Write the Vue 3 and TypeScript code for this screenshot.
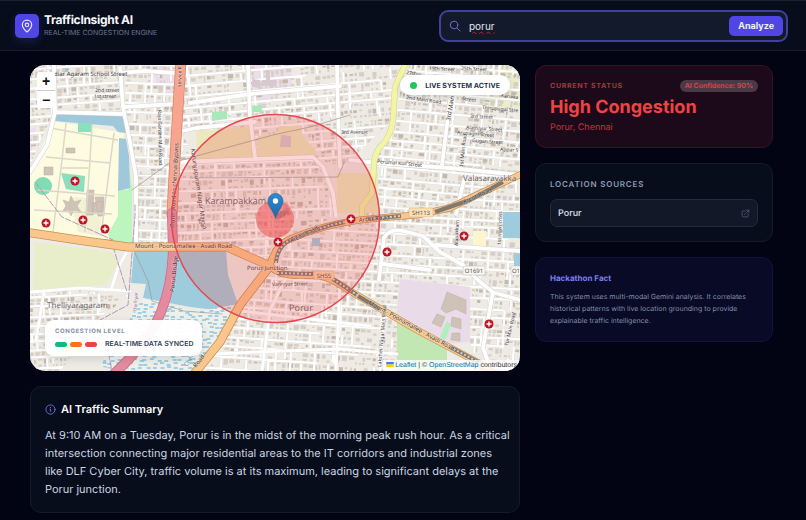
<script setup lang="ts">
import { ref } from 'vue'

interface District {
  id: string
  shape: string
  box: [number, number, number, number]
  angle: number
  seed: number
}
interface Label {
  text: string
  x: number
  y: number
  size: number
  angle?: number
  kind?: string
}

const query = ref('porur')
const levels = ['low', 'medium', 'high']

function random(seed: number) {
  let s = seed
  return () => {
    s = (s * 16807) % 2147483647
    return s / 2147483647
  }
}

const districts: District[] = [
  { id: 'nw', shape: 'M30 65H121L123 113L54 110L30 165Z', box: [0, 40, 160, 140], angle: -4, seed: 71 },
  { id: 'w', shape: 'M125 65H181L172 247H138L136 177L125 115Z', box: [100, 50, 120, 220], angle: 2, seed: 913 },
  { id: 'n', shape: 'M181 65H400L392 120L340 170L338 165L190 128L179 125Z', box: [150, 40, 280, 160], angle: -5, seed: 417 },
  { id: 'mid', shape: 'M178 128L197 160L315 158L330 190L336 214L277 250L268 262L226 246H173Z', box: [150, 110, 210, 170], angle: -2, seed: 5231 },
  { id: 'ne', shape: 'M405 65H520V175L417 214L362 219L372 193L376 157L395 120Z', box: [340, 40, 210, 200], angle: 5, seed: 8123 },
  { id: 'e', shape: 'M278 268L290 240L323 227L417 216L520 175V371H478L470 342V287L400 278L396 310L330 277Z', box: [250, 160, 300, 240], angle: 3, seed: 2647 },
  { id: 's', shape: 'M270 268L287 277L330 280L397 320V371H200L240 305Z', box: [180, 250, 240, 150], angle: 4, seed: 3319 },
  { id: 'sw', shape: 'M30 295L75 290L130 295L100 318L60 371H30Z', box: [10, 280, 140, 110], angle: -3, seed: 121 },
]

const fabric = districts.map((d) => {
  const next = random(d.seed)
  const [x0, y0, w, h] = d.box
  let streets = ''
  let houses = ''
  let darker = ''
  let y = y0
  while (y < y0 + h) {
    const rowHeight = 7 + Math.round(next() * 5)
    const start = x0 + Math.round(next() * 20)
    const length = w * (0.5 + next() * 0.5)
    streets += `M${start} ${y}h${length.toFixed(0)}`
    let x = x0
    let until = x + 15 + next() * 35
    while (x < x0 + w) {
      if (x > until) {
        streets += `M${x.toFixed(0)} ${y}v${next() > 0.5 ? rowHeight * 2 : rowHeight}`
        until = x + 14 + next() * 38
        x += 2
      }
      const bw = 1.5 + next() * 4
      const bh = 1.5 + next() * (rowHeight / 2 - 2)
      const top = y + 1.6 + next()
      const part = `M${x.toFixed(1)} ${top.toFixed(1)}h${bw.toFixed(1)}v${bh.toFixed(1)}h-${bw.toFixed(1)}z`
      const roll = next()
      if (roll > 0.75) darker += part
      else if (roll > 0.22) houses += part
      if (next() > 0.4) {
        const low = y + rowHeight - 3.5
        houses += `M${x.toFixed(1)} ${low.toFixed(1)}h${(bw * 0.8).toFixed(1)}v2h-${(bw * 0.8).toFixed(1)}z`
      }
      x += bw + 0.8 + next() * 2
    }
    y += rowHeight
  }
  const turn = `rotate(${d.angle} ${x0 + w / 2} ${y0 + h / 2})`
  return { ...d, streets, houses, darker, turn }
})

const marsh = (() => {
  const next = random(607)
  let path = ''
  for (let y = 303; y < 371; y += 4) {
    for (let x = 100; x < 240; x += 7) path += `M${(x + next() * 5).toFixed(1)} ${y + Math.round(next() * 2)}h4`
  }
  return path
})()

const clinics = [
  [75, 181], [83, 220], [46, 223], [105, 229], [351, 219], [278, 242], [387, 252], [464, 236], [489, 324],
]

const labels: Label[] = [
  { text: 'diar Agaram School Street', x: 54, y: 76, size: 6 },
  { text: '2nd street', x: 95, y: 92, size: 5 },
  { text: '1st street', x: 94, y: 98, size: 5 },
  { text: 'Raja Garden Main Road', x: 158, y: 110, size: 5, angle: 89 },
  { text: 'service R', x: 181, y: 87, size: 5, angle: -88 },
  { text: 'Outer Road to chennai Bypass', x: 174, y: 228, size: 6, angle: -87 },
  { text: 'Karunyapuram Nagar Main', x: 191, y: 149, size: 6, angle: 82 },
  { text: 'Karampakkam', x: 205, y: 204, size: 9, kind: 'place' },
  { text: 'Valasaravakka', x: 463, y: 181, size: 8, kind: 'place' },
  { text: 'Thelliyaragaram', x: 47, y: 308, size: 8, kind: 'place' },
  { text: 'Porur', x: 289, y: 311, size: 9, kind: 'place' },
  { text: '27th', x: 406, y: 74, size: 5, angle: 8 },
  { text: '19th Street', x: 429, y: 70, size: 5, angle: 3 },
  { text: '25th Street', x: 461, y: 70, size: 5, angle: 3 },
  { text: '2nd Main Road', x: 406, y: 99, size: 5, angle: 8 },
  { text: 'Street', x: 462, y: 100, size: 5, angle: 8 },
  { text: '3rd Avenue', x: 341, y: 134, size: 5, angle: -1 },
  { text: '3rd Main', x: 450, y: 121, size: 6, angle: -80 },
  { text: '3rd street', x: 470, y: 118, size: 5, angle: 2 },
  { text: 'Kanaka', x: 501, y: 97, size: 5, angle: 7 },
  { text: 'Thirupugal Stre', x: 482, y: 109, size: 5, angle: 5 },
  { text: 'Alathiyur Street', x: 466, y: 129, size: 5, angle: 4 },
  { text: 'Arunagiri Street', x: 457, y: 134, size: 5, angle: 5 },
  { text: 'Gugan Street', x: 472, y: 142, size: 5, angle: 4 },
  { text: 'Appar S', x: 500, y: 151, size: 5, angle: 3 },
  { text: '1st Main Road', x: 463, y: 167, size: 5, angle: -84 },
  { text: 'Perumal Koil Street', x: 377, y: 163, size: 5, angle: 5 },
  { text: 'Arcot Road', x: 464, y: 204, size: 6, angle: -24 },
  { text: 'Arcot Road', x: 359, y: 222, size: 6, angle: -5 },
  { text: 'Arcot Road', x: 291, y: 243, size: 6, angle: -27 },
  { text: 'Mount - Poonamallee - Avadi Road', x: 135, y: 248, size: 6 },
  { text: 'Porur Bridge', x: 174, y: 292, size: 6, angle: -84 },
  { text: 'Road', x: 197, y: 220, size: 5, angle: 55 },
  { text: 'Porur Junction', x: 247, y: 270, size: 6 },
  { text: 'Vanniyar Street', x: 272, y: 286, size: 5, angle: -1 },
  { text: 'Mount - Poonamallee - Avadi Road', x: 368, y: 304, size: 6, angle: 29 },
  { text: 'Lakshmi Nagar Main Road', x: 381, y: 367, size: 5, angle: -85 },
  { text: 'Tur Main Road', x: 508, y: 346, size: 5, angle: -77 },
  { text: 'Alapakkam', x: 458, y: 246, size: 5, angle: -88 },
  { text: '1st main cross', x: 501, y: 245, size: 5, angle: -88 },
  { text: 'Road', x: 196, y: 368, size: 6, angle: -52 },
  { text: 'Thelliyar', x: 137, y: 312, size: 5, angle: -88, kind: 'border' },
  { text: 'Chen', x: 187, y: 367, size: 6, angle: -58, kind: 'water' },
]
</script>

<template>
  <div class="page">
    <header class="topbar">
      <div class="brand">
        <span class="logo">
          <svg viewBox="0 0 24 24" class="icon" aria-hidden="true">
            <path d="M20 10c0 5-5.500 10.200-7.400 11.800a1 1 0 0 1-1.200 0C9.500 20.200 4 15 4 10a8 8 0 0 1 16 0Z" />
            <circle cx="12" cy="10" r="3" />
          </svg>
        </span>
        <div>
          <h1>TrafficInsight AI</h1>
          <p>REAL-TIME CONGESTION ENGINE</p>
        </div>
      </div>
      <form class="search" @submit.prevent>
        <svg viewBox="0 0 24 24" class="icon" aria-hidden="true">
          <circle cx="10" cy="10" r="7.500" />
          <path d="m15.500 15.500 6.500 6.500" />
        </svg>
        <input v-model="query" type="text" aria-label="Search location" spellcheck="false" />
        <button type="submit">Analyze</button>
      </form>
    </header>

    <main class="content">
      <div class="primary">
        <section class="map" aria-label="Traffic map">
          <svg class="tiles" viewBox="30 65 490 306" preserveAspectRatio="xMidYMid slice">
            <defs>
              <clipPath v-for="d in fabric" :id="d.id" :key="d.id"><path :d="d.shape" /></clipPath>
              <clipPath id="wet"><path d="M143 298L195 312L238 304L197 371H118L100 366Z" /></clipPath>
              <linearGradient id="pin" x1="0" y1="0" x2="0" y2="1">
                <stop offset="0" stop-color="#2f8bd0" />
                <stop offset="1" stop-color="#1e69a8" />
              </linearGradient>
            </defs>
            <rect x="30" y="65" width="490" height="306" fill="#eeebe5" />

            <path fill="#ebdde9" d="M151 65H177L175 95H160ZM249 65H291L292 90L258 106ZM30 130L36 126L30 160Z" />
            <path fill="#e8edca" d="M490 65H520V108L478 107ZM35 242L111 252L119 262L107 284L33 292Z" />
            <path fill="#fdfce0" d="M54 121L124 133L118 190V217L129 246L30 232V172Z" />
            <path fill="#e9e9cb" d="M70 197L90 198L102 216L98 236L78 232Z" opacity=".6" />
            <path fill="#bdf5bf" d="M127 154L132 187V246H113L108 234L118 216V190H128Z" />
            <path fill="#9fc9da" d="M55 112L123 115L126 133L118 132L113 126L54 121ZM119 138L126 139L129 156L130 188L118 191ZM62 65H68V72H62Z" />
            <path fill="#8bdfbd" d="M78 123H92V132H78ZM61 173L85 176L84 192L66 189Z" />
            <circle cx="43" cy="186" r="9" fill="#7fdcb5" />

            <g v-for="d in fabric" :key="d.id" :clip-path="`url(#${d.id})`">
              <g :transform="d.turn">
                <path :d="d.houses" fill="#d6cdc4" />
                <path :d="d.darker" fill="#c4b8ad" />
                <path :d="d.streets" fill="none" stroke="#dedbd6" stroke-width="2.600" />
                <path :d="d.streets" fill="none" stroke="#fff" stroke-width="2" />
              </g>
            </g>

            <path fill="#ebe9bd" d="M196 131L253 127V158L197 160ZM258 136L278 133V126H302V136L316 150V157L257 158ZM337 173H378V213H337Z" />
            <path fill="#d8c8cf" d="M281 135L291 136V147H280ZM252 79L260 80V88L252 87ZM266 70H270V80H276V86H262V80H266Z" />
            <path fill="#a8e8bb" d="M251 106L262 105V112H251ZM212 112L227 111V119L212 121Z" />
            <path fill="#9fccdd" d="M134 250L226 250L228 275L238 304L215 310L190 307L143 298L146 284L131 283Z" />
            <g clip-path="url(#wet)">
              <rect x="95" y="290" width="150" height="85" fill="#f0f0ea" />
              <path :d="marsh" stroke="#83c3e3" stroke-width="1.300" />
            </g>
            <path fill="#e9dbe8" d="M400 279L470 287V342L444 344L396 318Z" />
            <path fill="#c2e7b3" d="M397 319L447 348V371H397Z" />
            <path fill="#aef0bd" d="M440 337L447 321L451 325L445 340Z" />
            <path fill="#fbf6cf" d="M473 231H486V247H473Z" />
            <path fill="#9fccdd" d="M503 212H520V238H503ZM514 252H520V266H514ZM312 238H320V246H312ZM35 366L30 371H30Z" />
            <path fill="#cfc3b7" stroke="#bcafa2" stroke-width=".5" d="M447 292L466 300V314L456 309L446 313L441 309ZM437 314L445 317L441 327L432 323ZM452 317L461 319V329L451 326ZM452 333H460V341L451 340ZM63 200L69 202L71 196L74 202L81 200L77 206L81 212L74 210L71 216L68 210L62 212L66 206ZM87 190H94L93 215H86ZM95 197H104V216H98ZM44 167H53V175H44ZM66 148H75V153H66ZM92 203L102 201V211L93 214Z" />
            <path fill="none" stroke="#dcd6cb" stroke-width="1.500" d="M66 123L62 160L53 232M92 125L90 160L85 232M114 133L108 180L101 236M50 128L118 140M46 157L110 163M38 190L62 192L115 196M34 210L112 214M62 168H88" />

            <g fill="none" stroke-linecap="round" stroke-linejoin="round">
              <g v-for="edge in [true, false]" :key="String(edge)" :stroke="edge ? '#d7d3ce' : '#fff'" :stroke-width="edge ? 4.8 : 3.8">
                <path d="M120 68L123 107L129 137L136 177V245M120 73L145 71L175 73M123 107L177 104M54 65L55 112L47 145L30 172M55 112L123 114" />
                <path d="M248 65L250 117L255 157M190 103L250 94L340 86M182 131L196 128L255 122M181 162L230 160L313 157L323 167L333 193L336 216M337 65L338 113L340 167" />
                <path d="M350 160L377 163L450 168L520 175M450 100L442 165M384 238L379 280M384 238Q389 228 403 231L423 236L440 252L463 265L480 282L493 292L483 348L491 370M436 245L520 251M383 264L430 270M492 292L520 300M464 180L456 214" />
                <path d="M30 292L80 288L130 291M111 290L118 268L130 246M44 292L36 340M216 354L256 352L340 349L397 354M287 276L270 310L262 371M340 282L336 371M384 315L380 371M240 311L370 326" stroke-width="3" />
              </g>
              <path d="M78 240L111 240L127 292M35 182L62 217L113 240M135 205V215L128 305L100 320M102 322L112 371" stroke="#b696b8" stroke-width="1" stroke-dasharray="6 2" />
              <path d="M132 190L168 164L200 155L229 147L273 135L310 127L350 115M135 253L148 281L152 301L184 311L222 314M190 178L338 177L344 163" stroke="#9b9895" stroke-width=".7" />
              <path d="M405 65L395 87L393 120Q391 137 380 147Q374 155 374 165L372 193L362 207V220" stroke="#cfd09b" stroke-width="6" />
              <path d="M405 65L395 87L393 120Q391 137 380 147Q374 155 374 165L372 193L362 207V220" stroke="#f3f5a5" stroke-width="5" />
              <path d="M181 60L176 140L172 215" stroke="#d9816c" stroke-width="11" />
              <path d="M181 60L176 140L172 215" stroke="#f8a58f" stroke-width="9.500" />
              <path d="M172 213L173 250Q172 285 161 312Q150 340 114 374" stroke="#c96c84" stroke-width="10" />
              <path d="M172 213L173 250Q172 285 161 312Q150 340 114 374" stroke="#e58b9f" stroke-width="8.500" />
              <g v-for="edge in [true, false]" :key="`m${edge}`" :stroke="edge ? '#c7904f' : '#fbc68c'">
                <path d="M25 232L78 240L128 247L198 247L227 247L270 266L240 305L220 342L194 374" :stroke-width="edge ? 9 : 7.5" />
                <path d="M270 266Q280 278 313 275Q329 276 350 291L417 330L477 362L495 374M270 265Q275 245 290 239Q323 225 360 220L390 217L417 215L450 208L483 192L524 173" :stroke-width="edge ? 7 : 5.6" />
              </g>
              <path d="M276 263Q277 246 292 239Q323 226 345 222M366 219L401 216M435 212L470 200L503 182M277 273L313 274M333 279L357 295M358 296L380 309M450 347L480 363" stroke="#817970" stroke-width="4" stroke-linecap="butt" />
              <path d="M276 263Q277 246 292 239Q323 226 345 222M366 219L401 216M277 273L313 274M333 279L357 295M450 347L480 363" stroke="#ddd0c3" stroke-width="2" stroke-dasharray="2 2" stroke-linecap="butt" />
            </g>

            <g class="shields">
              <rect x="409" y="208" width="24" height="9" rx="1" fill="#fbe0b8" stroke="#d6ac70" />
              <text x="421" y="215">SH113</text>
              <rect x="314" y="271" width="20" height="8" rx="1" fill="#fbd5ae" stroke="#d6ac70" />
              <text x="324" y="278">SH55</text>
              <rect x="463" y="266" width="22" height="9" rx="1" fill="#f7f7f5" stroke="#bbb" />
              <text x="474" y="273">O1691</text>
              <rect x="511" y="266" width="20" height="9" rx="1" fill="#f7f7f5" stroke="#bbb" />
              <text x="516" y="273">O1</text>
            </g>
            <text
              v-for="(l, i) in labels"
              :key="i"
              class="label"
              :class="l.kind"
              :font-size="l.size"
              :transform="`translate(${l.x} ${l.y}) rotate(${l.angle ?? 0})`"
            >{{ l.text }}</text>

            <circle cx="275.500" cy="218.500" r="104" fill="#ef4444" fill-opacity=".22" stroke="#e5484f" stroke-width="1.500" />
            <circle cx="275" cy="219" r="19" fill="#ef4444" fill-opacity=".5" />
            <g v-for="([x, y], i) in clinics" :key="`c${i}`">
              <circle :cx="x" :cy="y" r="4.500" fill="#bd1625" />
              <path :d="`M${x - 2.5} ${y}h5M${x} ${y - 2.5}v5`" stroke="#fff" stroke-width="1.400" />
            </g>
            <ellipse cx="282" cy="214" rx="9" ry="3" fill="#5b2630" opacity=".22" transform="rotate(-35 282 214)" />
            <path d="M275.500 218C274 212 268 206.500 268 201a7.500 7.500 0 0 1 15 0C283 206.500 277 212 275.500 218Z" fill="url(#pin)" stroke="#25679c" stroke-width=".7" />
            <circle cx="275.500" cy="201" r="2.700" fill="#fff" />
          </svg>

          <div class="zoom">
            <button type="button" aria-label="Zoom in">+</button>
            <button type="button" aria-label="Zoom out">−</button>
          </div>
          <div class="live"><i></i>LIVE SYSTEM ACTIVE</div>
          <div class="legend">
            <h2>CONGESTION LEVEL</h2>
            <div class="scale">
              <i v-for="level in levels" :key="level" :class="level"></i>
              <span>REAL-TIME DATA SYNCED</span>
            </div>
          </div>
          <div class="credit">
            <svg viewBox="0 0 12 8" aria-hidden="true"><path fill="#4c7be1" d="M0 0h12v4H0z" /><path fill="#ffd500" d="M0 4h12v4H0z" /></svg>
            <a href="#">Leaflet</a> | © <a href="#">OpenStreetMap</a> contributors
          </div>
        </section>

        <section class="card summary">
          <h2>
            <svg viewBox="0 0 24 24" class="icon" aria-hidden="true">
              <circle cx="12" cy="12" r="10" />
              <path d="M11 11h1v5h1M12 7.500v.5" />
            </svg>
            AI Traffic Summary
          </h2>
          <p>
            At 9:10 AM on a Tuesday, Porur is in the midst of the morning peak rush hour. As a critical
            intersection connecting major residential areas to the IT corridors and industrial zones
            like DLF Cyber City, traffic volume is at its maximum, leading to significant delays at the
            Porur junction.
          </p>
        </section>
      </div>

      <aside class="side">
        <section class="card status">
          <div class="status-head">
            <h2>CURRENT STATUS</h2>
            <span class="badge">AI Confidence: 90%</span>
          </div>
          <strong>High Congestion</strong>
          <p>Porur, Chennai</p>
        </section>

        <section class="card sources">
          <h2>LOCATION SOURCES</h2>
          <a href="#">
            Porur
            <svg viewBox="0 0 24 24" class="icon" aria-hidden="true">
              <path d="M11 5H6a3 3 0 0 0-3 3v10a3 3 0 0 0 3 3h10a3 3 0 0 0 3-3v-5M15 3h6v6M9 15 21 3" />
            </svg>
          </a>
        </section>

        <section class="card fact">
          <h2>Hackathon Fact</h2>
          <p>
            This system uses multi-modal Gemini analysis. It correlates historical patterns with live
            location grounding to provide explainable traffic intelligence.
          </p>
        </section>
      </aside>
    </main>
  </div>
</template>

<style>
body {
  background: #020414;
}
</style>

<style scoped>
.page {
  min-height: 100vh;
  box-sizing: border-box;
  font-family: Inter, "Liberation Sans", sans-serif;
  text-rendering: geometricPrecision;
  color: #cbd5e1;
  background: #020414;
}
.page * {
  box-sizing: border-box;
}
h1,
h2,
p {
  margin: 0;
}
.icon {
  fill: none;
  stroke: currentColor;
  stroke-width: 2;
  stroke-linecap: round;
  stroke-linejoin: round;
  flex: none;
}
.topbar {
  display: flex;
  align-items: center;
  justify-content: space-between;
  gap: 24px;
  height: 51px;
  padding: 0 18px 0 15px;
  background: #080d1c;
  border-top: 1px solid #1a2130;
  border-bottom: 1px solid #161d2c;
}
.brand {
  display: flex;
  align-items: center;
  gap: 5px;
  white-space: nowrap;
}
.logo {
  display: grid;
  place-items: center;
  width: 24px;
  height: 24px;
  border-radius: 5px;
  color: #e8e8ff;
  background: #5046e5;
  box-shadow: 0 3px 8px rgba(79, 70, 229, 0.25);
}
.logo .icon {
  width: 14px;
  height: 14px;
}
.brand h1 {
  font-size: 12px;
  line-height: 14px;
  font-weight: 700;
  letter-spacing: -0.025em;
  color: #f5f7fb;
}
.brand p {
  font-size: 7px;
  line-height: 11px;
  color: #6b768e;
}
.search {
  display: flex;
  align-items: center;
  gap: 8px;
  flex: 0 1 349px;
  height: 32px;
  padding: 0 3px 0 8px;
  border: 2px solid #41409a;
  border-radius: 9px;
  background: #131a2b;
}
.search .icon {
  width: 12px;
  height: 12px;
  color: #6e70cf;
}
.search input {
  flex: 1;
  min-width: 0;
  padding: 0;
  border: 0;
  outline: 0;
  background: none;
  font: 400 10px/16px Inter, sans-serif;
  color: #e2e8f0;
  text-decoration: underline wavy #c01d2e 1px;
}
.search button {
  height: 20px;
  padding: 0 9px;
  border: 0;
  border-radius: 5px;
  font: 700 9px/20px Inter, sans-serif;
  color: #f1f1ff;
  background: #5046e5;
}
.content {
  display: grid;
  grid-template-columns: minmax(0, 1fr) 238px;
  align-items: start;
  gap: 15px;
  padding: 14px 33px 6px 30px;
}
.primary,
.side {
  display: grid;
  gap: 15px;
}
.map {
  position: relative;
  overflow: hidden;
  border-radius: 15px;
  aspect-ratio: 490 / 306;
}
.tiles {
  display: block;
  width: 100%;
  height: 100%;
}
.label {
  font-family: "Noto Sans", sans-serif;
  fill: #383433;
  stroke: #fff;
  stroke-opacity: 0.4;
  stroke-width: 1px;
  paint-order: stroke;
}
.label.place {
  fill: #6c6564;
}
.label.border {
  fill: #9573a0;
}
.label.water {
  fill: #6387a5;
}
.shields text {
  font: 6px "Noto Sans", sans-serif;
  text-anchor: middle;
  fill: #58503f;
}
.shields rect {
  stroke-width: 0.5px;
}
.zoom {
  position: absolute;
  top: 7px;
  left: 7px;
  display: grid;
  overflow: hidden;
  border-radius: 3px;
  background: #fff;
}
.zoom button {
  width: 18px;
  height: 18px;
  padding: 0;
  border: 0;
  background: none;
  font: bold 14px/18px "Liberation Sans", sans-serif;
  color: #111;
}
.zoom button + button {
  border-top: 1px solid #ccc;
}
.live {
  position: absolute;
  top: 10px;
  right: 10px;
  display: flex;
  align-items: center;
  gap: 8px;
  height: 20px;
  padding: 0 10px;
  border-radius: 10px;
  background: rgba(255, 255, 255, 0.96);
  box-shadow: 0 2px 6px rgba(0, 0, 0, 0.12);
  font-size: 7px;
  font-weight: 700;
  color: #273449;
}
.live i {
  width: 7px;
  height: 7px;
  border-radius: 50%;
  background: #22c55e;
}
.legend {
  position: absolute;
  left: 15px;
  bottom: 15px;
  padding: 7px 8px 7px 10px;
  border-radius: 9px;
  background: rgba(255, 255, 255, 0.96);
  box-shadow: 0 3px 8px rgba(0, 0, 0, 0.12);
  white-space: nowrap;
}
.legend h2 {
  font-size: 6px;
  line-height: 9px;
  font-weight: 700;
  letter-spacing: 0.1em;
  color: #8592a9;
}
.scale {
  display: flex;
  align-items: center;
  gap: 3px;
  margin-top: 3px;
}
.scale i {
  width: 12px;
  height: 5px;
  border-radius: 3px;
}
.low {
  background: #10b981;
}
.medium {
  background: #f97316;
}
.high {
  background: #ef4444;
}
.scale span {
  margin-left: 5px;
  font-size: 7px;
  line-height: 10px;
  font-weight: 600;
  color: #334155;
}
.credit {
  position: absolute;
  right: 0;
  bottom: 0;
  padding: 0 3px;
  background: rgba(255, 255, 255, 0.8);
  font: 7px/11px "Liberation Sans", sans-serif;
  color: #333;
  white-space: nowrap;
}
.credit svg {
  width: 8px;
  height: 5px;
  margin-right: 1px;
}
.credit a {
  color: #0078a8;
  text-decoration: none;
}
.card {
  padding: 14px;
  border: 1px solid #141b2a;
  border-radius: 11px;
  background: #080d1c;
}
.summary {
  padding-right: 8px;
}
.summary h2 {
  display: flex;
  align-items: center;
  gap: 5px;
  font-size: 11px;
  line-height: 17px;
  font-weight: 600;
  color: #f8fafc;
}
.summary .icon {
  width: 11px;
  height: 11px;
  color: #7074d8;
}
.summary p {
  margin-top: 8px;
  font-size: 11px;
  line-height: 18px;
}
.status {
  padding-bottom: 13px;
  background: #1c0a1a;
  border-color: #3a1222;
  color: #ef4444;
}
.status-head {
  display: flex;
  align-items: center;
  justify-content: space-between;
}
.status h2 {
  font-size: 7px;
  line-height: 12px;
  font-weight: 700;
  letter-spacing: 0.1em;
  color: #ab343b;
}
.badge {
  padding: 0 5px;
  border-radius: 6px;
  background: #4a3a47;
  font-size: 7px;
  line-height: 12px;
  font-weight: 600;
  color: #e34248;
}
.status strong {
  display: block;
  margin-top: 4px;
  font-size: 18px;
  line-height: 24px;
  font-weight: 700;
}
.status p {
  margin-top: 2px;
  font-size: 9px;
  line-height: 12px;
  color: #bd393f;
}
.sources h2 {
  font-size: 8px;
  line-height: 12px;
  font-weight: 600;
  letter-spacing: 0.1em;
  color: #8f9db2;
}
.sources a {
  display: flex;
  align-items: center;
  justify-content: space-between;
  height: 28px;
  margin-top: 9px;
  padding: 0 7px;
  border: 1px solid #242b3a;
  border-radius: 7px;
  background: #121828;
  font-size: 9px;
  font-weight: 500;
  color: #dbe2ec;
  text-decoration: none;
}
.sources .icon {
  width: 9px;
  height: 9px;
  color: #566276;
}
.fact {
  background: #080a26;
  border-color: #13143d;
}
.fact h2 {
  font-size: 8px;
  line-height: 12px;
  font-weight: 700;
  color: #7c7ff0;
}
.fact p {
  margin-top: 7px;
  font-size: 7px;
  line-height: 12px;
  color: #8490a9;
}
</style>
